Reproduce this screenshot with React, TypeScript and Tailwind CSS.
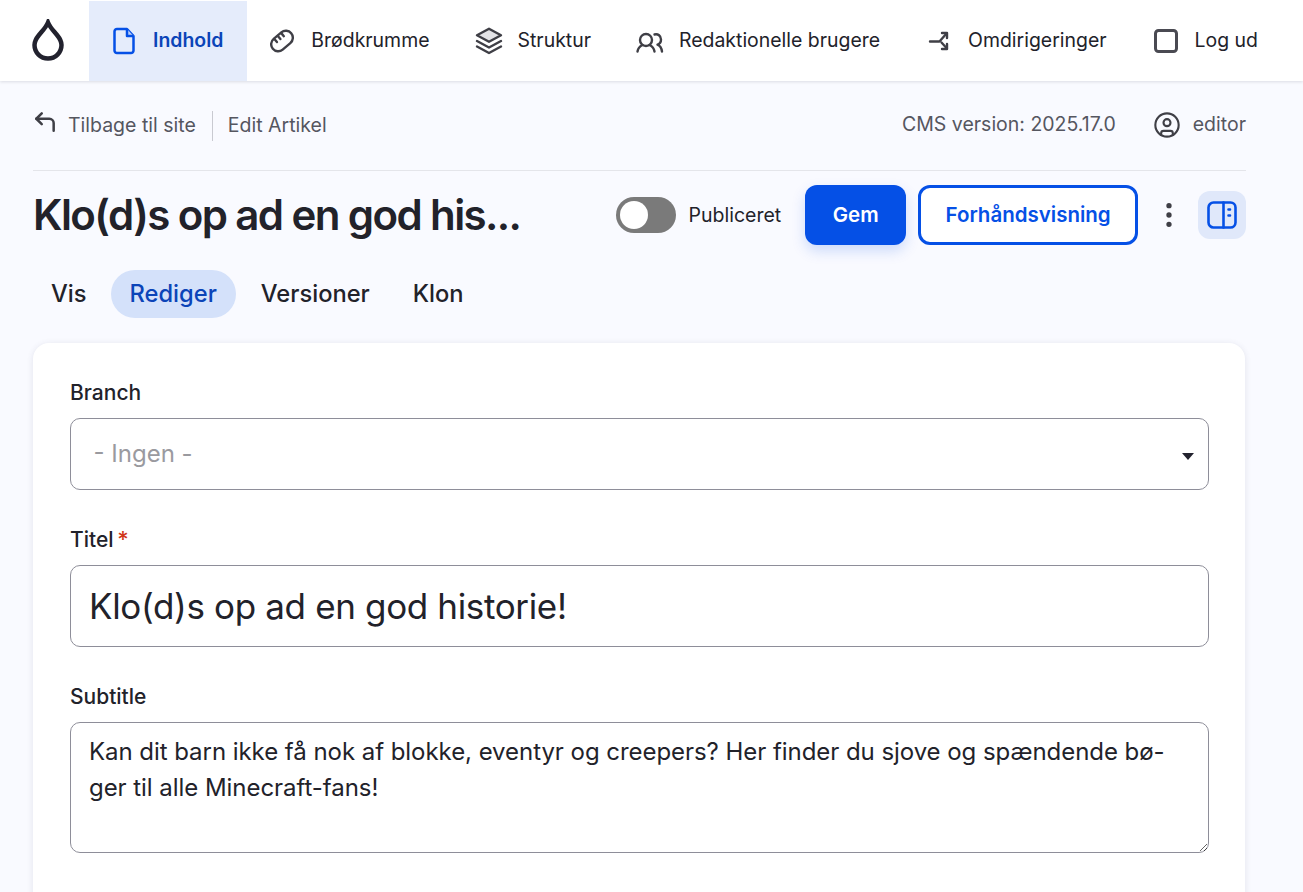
import { CircleUser, CornerUpLeft, EllipsisVertical } from "lucide-react";
import type { ReactNode } from "react";

function FileIcon() {
  return (
    <svg width="28" height="28" viewBox="0 0 28 28" fill="none" stroke="#0550e6" strokeWidth="2.500" strokeLinejoin="round">
      <path d="M17 2H7a2.500 2.500 0 0 0-2.500 2.500v19A2.500 2.500 0 0 0 7 26h14a2.500 2.500 0 0 0 2.500-2.500V9L17 2Z" />
      <path d="M17 2v7h6.500" fill="#bcd0f8" />
    </svg>
  );
}

function BreadIcon() {
  return (
    <svg width="24" height="24" viewBox="0 0 24 24" fill="none" stroke="#3f3f46" strokeWidth="2.400" strokeLinecap="round">
      <g transform="translate(12 12) rotate(-40)">
        <rect x="-12" y="-7" width="24" height="14" rx="7" />
        <path d="M-4.500-6.500v4M0-6.500v4M4.500-6.500v4" />
      </g>
    </svg>
  );
}

function StackIcon() {
  return (
    <svg width="28" height="28" viewBox="0 0 28 28" fill="none" stroke="#3f3f46" strokeWidth="2.400" strokeLinecap="round" strokeLinejoin="round">
      <path d="M14 1.800 26 8.300 14 14.800 2 8.300 14 1.800Z" fill="#e4e4e7" />
      <path d="M2 14 14 20.500 26 14" />
      <path d="M2 19.500 14 26 26 19.500" />
    </svg>
  );
}

function PeopleIcon() {
  return (
    <svg width="28" height="24" viewBox="0 0 28 24" fill="none" stroke="#3f3f46" strokeWidth="2.400" strokeLinecap="round" strokeLinejoin="round">
      <circle cx="10" cy="11" r="6" />
      <path d="M1.500 22.500c.5-3 2-5 5-6.500M13.500 16c3 1.500 4.500 3.500 5 6.500" />
      <path d="M18.500 5.500c3.500-1 6.500 1.500 6.500 5 0 2.500-1.500 4.500-3.500 5.200 2.500 1 4 3.500 4.500 6.800" />
    </svg>
  );
}

function RedirectIcon() {
  return (
    <svg width="28" height="28" viewBox="0 0 28 28" fill="none" stroke="#3f3f46" strokeWidth="2.400" strokeLinecap="round" strokeLinejoin="round">
      <path d="M5 14.500h9.500L21.500 6.500" />
      <path d="M17 6h5v5" />
      <path d="M16.500 15.500l5 5.500" />
      <path d="M22 17v5h-5" />
    </svg>
  );
}

function LogoutIcon() {
  return (
    <svg width="28" height="28" viewBox="0 0 28 28" fill="none" stroke="#4a4a52" strokeWidth="3">
      <rect x="3.500" y="3.500" width="21" height="21" rx="3" />
    </svg>
  );
}

function NavItem({ icon, label, active }: { icon: ReactNode; label: string; active?: boolean }) {
  return (
    <div className={`flex shrink-0 items-center gap-[15px] pr-6 pl-[21px] text-[19.45px] ${active ? "bg-[#e5ecfb] font-semibold text-[#0b44b8]" : "text-[#22222a]"}`}>
      <span className="flex w-7 shrink-0 items-center justify-center">{icon}</span>
      <span className="whitespace-nowrap">{label}</span>
    </div>
  );
}

function FieldLabel({ children }: { children: ReactNode }) {
  return <div className="mb-[13px] h-6 text-[21px] leading-6 font-medium text-[#22222a]">{children}</div>;
}

export default function App() {
  return (
    <div className="h-[892px] overflow-hidden bg-[#f9faff] font-['Inter',sans-serif] text-[#22222a]">
      {/* top menu */}
      <nav className="flex h-[81px] overflow-hidden bg-white pt-px shadow-[0_1px_3px_rgba(40,40,60,0.14)]">
        <div className="flex w-[89px] shrink-0 items-center justify-center pb-[2px] pl-[7px]">
          <svg width="34" height="42" viewBox="0 0 34 42" fill="none" stroke="#22222e" strokeWidth="4.500">
            <path d="M17 3.500c2 5 5.500 8.200 9 12.500 2.700 3.300 4.500 6.200 4.500 10 0 7.500-6 13.500-13.500 13.500S3.500 33.500 3.500 26c0-3.800 1.800-6.700 4.500-10 3.500-4.300 7-7.500 9-12.500Z" />
          </svg>
        </div>
        <NavItem active label="Indhold" icon={<FileIcon />} />
        <NavItem label="Brødkrumme" icon={<BreadIcon />} />
        <NavItem label="Struktur" icon={<StackIcon />} />
        <NavItem label="Redaktionelle brugere" icon={<PeopleIcon />} />
        <NavItem label="Omdirigeringer" icon={<RedirectIcon />} />
        <NavItem label="Log ud" icon={<LogoutIcon />} />
        <NavItem label="" icon={<span className="h-2 w-7 rounded-full bg-[#3f3f46]" />} />
      </nav>

      <main className="mr-[57px] ml-[33px]">
        {/* meta bar */}
        <div className="flex h-[90px] items-center justify-between border-b border-[#e4e5ea] text-[19.5px] text-[#55565f]">
          <div className="flex items-center">
            <CornerUpLeft size={26} color="#3f3f46" strokeWidth={2.300} className="-mt-[7px] -ml-[1px]" />
            <span className="ml-[10px]">Tilbage til site</span>
            <span className="mr-[15px] ml-4 h-[30px] w-px bg-[#c9cad1]" />
            <span>Edit Artikel</span>
          </div>
          <div className="mb-[2px] flex items-center">
            <span>CMS version: 2025.17.0</span>
            <CircleUser size={28} color="#3f3f46" strokeWidth={1.800} className="mr-3 ml-[37px]" />
            <span>editor</span>
          </div>
        </div>

        {/* title row */}
        <div className="mt-[14px] flex h-[60px] items-center">
          <h1 className="w-[583px] text-[42px] leading-[60px] font-semibold tracking-[-0.038em] text-[#22222a]">Klo(d)s op ad en god his...</h1>
          <div className="flex h-[36px] w-[60px] items-center rounded-full bg-[#7a7a7a] pl-[4px]">
            <span className="h-[28px] w-[28px] rounded-full bg-white" />
          </div>
          <span className="mt-[2px] ml-[13px] text-[19.5px]">Publiceret</span>
          <button className="ml-[24px] h-[60px] w-[101px] rounded-[12px] bg-[#0550e6] text-[20.500px] font-semibold text-white shadow-[0_6px_14px_rgba(5,80,230,0.18)]">Gem</button>
          <button className="ml-3 h-[60px] w-[220px] rounded-[12px] border-[3px] border-[#0550e6] bg-white text-[20.500px] font-semibold text-[#0550e6]">Forhåndsvisning</button>
          <EllipsisVertical size={32} color="#3f3f46" strokeWidth={2} className="ml-[15px]" />
          <div className="ml-[13px] flex h-[48px] w-[48px] items-center justify-center rounded-[12px] bg-[#e0e8fa]">
            <svg width="30" height="28" viewBox="0 0 30 28" fill="none" stroke="#0550e6" strokeWidth="2.600" strokeLinecap="round">
              <rect x="1.500" y="1.500" width="27" height="25" rx="5" />
              <path d="M16.500 1.500v25" />
              <path d="M21.500 8.500h1.500M21.500 14.500h1.500" />
            </svg>
          </div>
        </div>

        {/* tabs */}
        <div className="mt-[25px] flex h-[48px] items-center text-[23.7px] leading-[48px] font-medium">
          <span className="px-[18px]">Vis</span>
          <span className="ml-[6px] rounded-full bg-[#d4e1fa] px-[19px] text-[#0b44b8]">Rediger</span>
          <span className="ml-[7px] px-[18px]">Versioner</span>
          <span className="ml-[7px] px-[18px]">Klon</span>
        </div>

        {/* form card */}
        <section className="mt-[25px] mr-px h-[700px] rounded-t-[16px] bg-white pt-[38px] pr-9 pl-[37px] shadow-[0_1px_6px_rgba(60,60,100,0.12)]">
          <FieldLabel>Branch</FieldLabel>
          <div className="flex h-[72px] items-center justify-between rounded-[10px] border border-[#8e8e99] bg-white pr-[14px] pl-[22.5px] text-[24px] text-[#9a9a9f]">
            <span>- Ingen -</span>
            <svg width="12" height="7" viewBox="0 0 12 7" className="mt-1">
              <path d="M0 0h12L6 7Z" fill="#22222e" />
            </svg>
          </div>

          <div className="mt-[38px]">
            <FieldLabel>
              Titel <span className="-ml-[2px] text-[22px] leading-none text-[#d0361a]">*</span>
            </FieldLabel>
            <input
              readOnly
              defaultValue="Klo(d)s op ad en god historie!"
              className="block h-[82px] w-full rounded-[10px] border border-[#8e8e99] bg-white px-[18px] text-[35px] tracking-[-0.01em] text-[#22222a] outline-none"
            />
          </div>

          <div className="mt-[38px]">
            <FieldLabel>Subtitle</FieldLabel>
            <textarea
              readOnly
              rows={3}
              defaultValue={"Kan dit barn ikke få nok af blokke, eventyr og creepers? Her finder du sjove og spændende bø-\nger til alle Minecraft-fans!"}
              className="block h-[131px] w-full rounded-[10px] border border-[#8e8e99] bg-white px-[18px] py-[11px] text-[24px] leading-[36px] tracking-[-0.05px] text-[#22222a] outline-none"
            />
          </div>
        </section>
      </main>
    </div>
  );
}
